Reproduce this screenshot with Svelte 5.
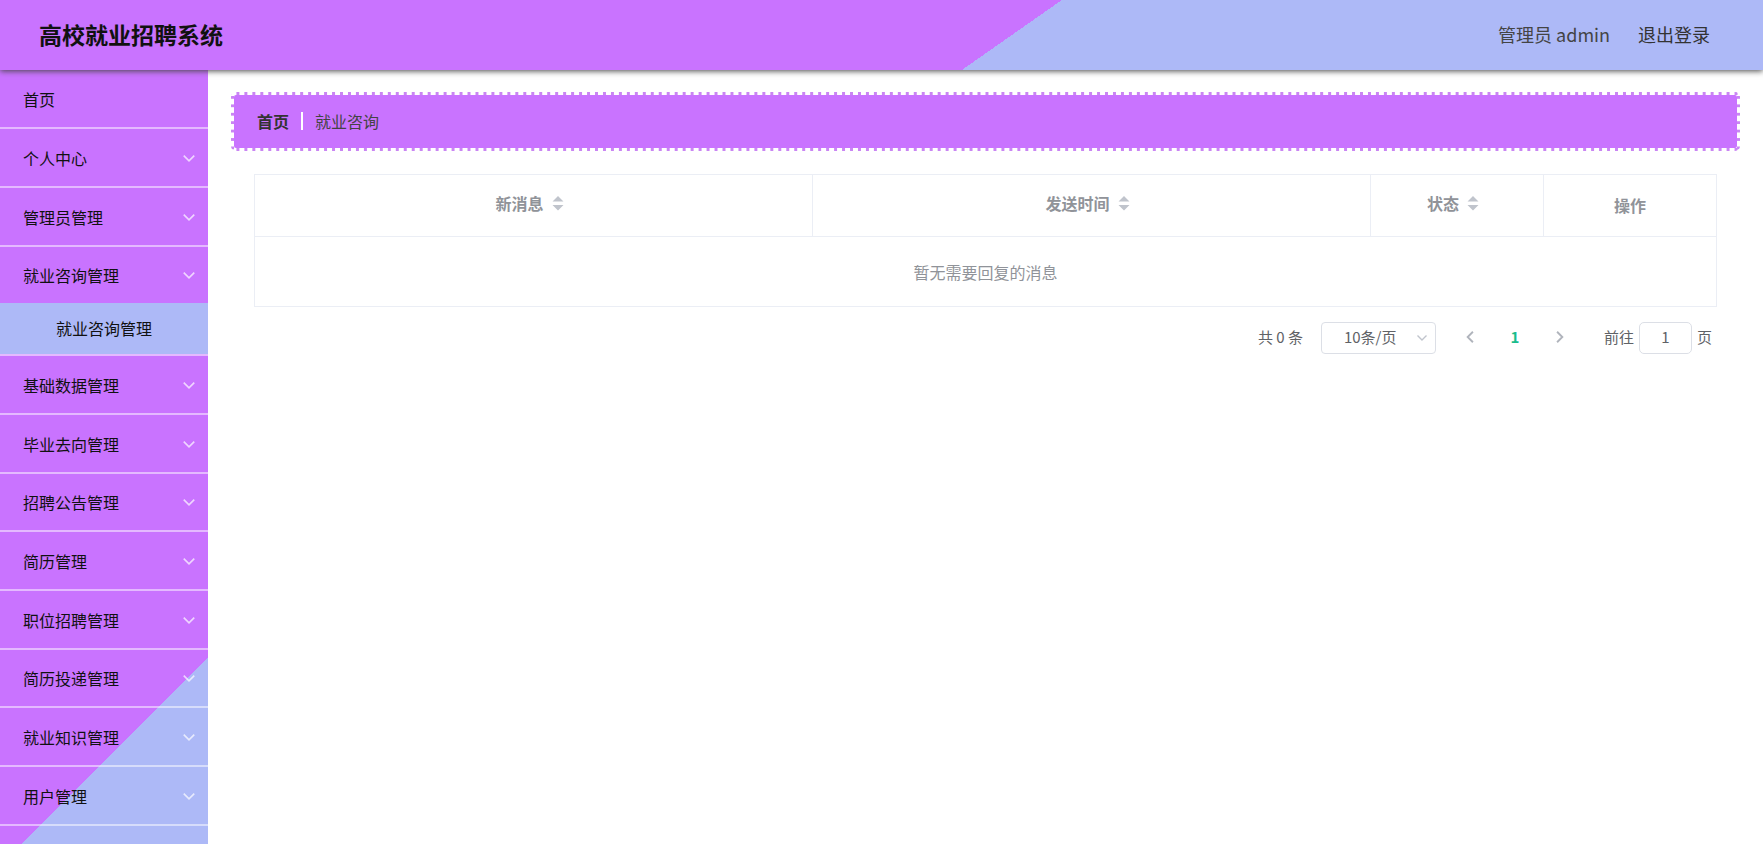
<script lang="ts">
	type MenuItem = { name: string; children?: string[]; open?: boolean };

	const menus: MenuItem[] = [
		{ name: '首页' },
		{ name: '个人中心', children: [] },
		{ name: '管理员管理', children: [] },
		{ name: '就业咨询管理', children: ['就业咨询管理'], open: true },
		{ name: '基础数据管理', children: [] },
		{ name: '毕业去向管理', children: [] },
		{ name: '招聘公告管理', children: [] },
		{ name: '简历管理', children: [] },
		{ name: '职位招聘管理', children: [] },
		{ name: '简历投递管理', children: [] },
		{ name: '就业知识管理', children: [] },
		{ name: '用户管理', children: [] }
	];

	const columns = [
		{ label: '新消息', sortable: true },
		{ label: '发送时间', sortable: true },
		{ label: '状态', sortable: true, narrow: true },
		{ label: '操作', sortable: false, narrow: true }
	];

	let page = $state('1');
	let pageSize = $state('10');
</script>

<div class="layout">
	<header class="navbar">
		<h1 class="title">高校就业招聘系统</h1>
		<div class="user">
			<span>管理员 admin</span>
			<a class="logout" href="#/login">退出登录</a>
		</div>
	</header>

	<div class="body">
		<nav class="sidebar">
			<ul class="menu">
				{#each menus as item}
					<li class="menu-item">
						<button class="menu-title">
							{item.name}
							{#if item.children}
								<svg class="arrow" viewBox="0 0 12 12" aria-hidden="true">
									<path d="M1.5 4L6 8.5L10.5 4" />
								</svg>
							{/if}
						</button>
						{#if item.open}
							{#each item.children ?? [] as child}
								<a class="submenu" href="#/chat">{child}</a>
							{/each}
						{/if}
					</li>
				{/each}
			</ul>
		</nav>

		<main class="main">
			<div class="breadcrumb">
				<a class="crumb-home" href="#/index">首页</a>
				<span class="separator"></span>
				<span>就业咨询</span>
			</div>

			<section class="content">
				<table>
					<thead>
						<tr>
							{#each columns as col}
								<th class:narrow={col.narrow} class:sortable={col.sortable}>
									<span class="cell">
										{col.label}
										{#if col.sortable}
											<svg class="sort" viewBox="0 0 12 16" aria-hidden="true">
												<path d="M6 1L11.5 6.5H0.5ZM0.5 10H11.5L6 15.5Z" />
											</svg>
										{/if}
									</span>
								</th>
							{/each}
						</tr>
					</thead>
					<tbody>
						<tr>
							<td colspan="4">暂无需要回复的消息</td>
						</tr>
					</tbody>
				</table>

				<div class="pagination">
					<span class="total">共 0 条</span>
					<div class="sizes">
						<select bind:value={pageSize} aria-label="每页条数">
							<option value="10">10条/页</option>
						</select>
						<svg class="caret" viewBox="0 0 12 12" aria-hidden="true">
							<path d="M1.5 3.5L6 8L10.5 3.5" />
						</svg>
					</div>
					<button class="step" aria-label="上一页" disabled>
						<svg viewBox="0 0 12 12" aria-hidden="true"><path d="M8.5 1.5L4 6L8.5 10.5" /></svg>
					</button>
					<button class="number">1</button>
					<button class="step" aria-label="下一页" disabled>
						<svg viewBox="0 0 12 12" aria-hidden="true"><path d="M3.5 1.5L8 6L3.5 10.5" /></svg>
					</button>
					<label class="jump">
						<span>前往</span>
						<input type="text" bind:value={page} />
						<span>页</span>
					</label>
				</div>
			</section>
		</main>
	</div>
</div>

<style>
	:global(body) {
		margin: 0;
		background: #fff;
		font-family: 'Noto Sans CJK SC', sans-serif;
	}

	.layout {
		display: flex;
		flex-direction: column;
		height: 100vh;
		overflow: hidden;
	}

	button,
	select,
	input {
		font-family: inherit;
	}

	button {
		padding: 0;
		border: 0;
		background: none;
		cursor: pointer;
	}

	a {
		color: inherit;
		text-decoration: none;
	}

	path {
		fill: none;
		stroke: currentColor;
		stroke-width: 1.4;
	}

	.navbar {
		position: relative;
		z-index: 1;
		display: flex;
		flex: none;
		align-items: center;
		justify-content: space-between;
		height: 70px;
		padding: 0 53px 2px 39px;
		box-sizing: border-box;
		background: linear-gradient(145deg, #c973ff 57%, #adb9f7 57%);
		box-shadow: 0 1px 6px #444;
	}

	.title {
		margin: 0;
		font-size: 23px;
		line-height: 34px;
		color: #111;
	}

	.user {
		display: flex;
		gap: 28px;
		font-size: 18px;
		color: #444;
	}

	.logout {
		color: #333;
	}

	.body {
		display: flex;
		flex: 1;
		min-height: 0;
	}

	.sidebar {
		flex: none;
		width: 208px;
		overflow: hidden;
		background: linear-gradient(135deg, #c973ff 81%, #adb9f7 81%);
	}

	.menu {
		margin: 0;
		padding: 0;
		list-style: none;
	}

	.menu-item {
		border-bottom: 2px solid rgba(255, 255, 255, 0.5);
	}

	.menu-title {
		display: flex;
		align-items: center;
		justify-content: space-between;
		width: 100%;
		height: 57px;
		padding: 0 12px 0 23px;
		font-size: 16px;
		color: #111;
	}

	.menu-item:nth-child(3n + 4) .menu-title {
		height: 56px;
	}

	.arrow {
		width: 14px;
		height: 14px;
		color: rgba(255, 255, 255, 0.7);
	}

	.submenu {
		display: block;
		padding-left: 56px;
		font-size: 16px;
		line-height: 51px;
		color: #111;
		background: #adb9f7;
	}

	.main {
		flex: 1;
		padding: 22px 23px;
	}

	/* stamp-like edge: small notches of colour along all four sides */
	.breadcrumb {
		--notch: transparent 4px, #c985f3 4px 7px, transparent 7px;
		display: flex;
		align-items: center;
		height: 59px;
		padding: 0 23px 2px;
		border: 3px solid transparent;
		box-sizing: border-box;
		border-radius: 5px;
		font-size: 16px;
		color: #444;
		background:
			linear-gradient(#c973ff, #c973ff) padding-box,
			linear-gradient(90deg, var(--notch)) top / 8px 3px round no-repeat border-box,
			linear-gradient(90deg, var(--notch)) bottom / 8px 3px round no-repeat border-box,
			linear-gradient(var(--notch)) left / 3px 8px no-repeat round border-box,
			linear-gradient(var(--notch)) right / 3px 8px no-repeat round border-box;
	}

	.crumb-home {
		font-weight: 700;
		color: #333;
	}

	.separator {
		width: 2px;
		height: 18px;
		margin: 0 12px;
		background: #fff;
	}

	.content {
		padding: 23px;
	}

	table {
		width: 100%;
		border: 1px solid #ebeef5;
		border-collapse: collapse;
		table-layout: fixed;
		color: #909399;
	}

	th {
		height: 62px;
		padding: 0 0 2px;
		border: 1px solid #ebeef5;
		box-sizing: border-box;
		font-size: 16px;
	}

	th.narrow {
		width: 173px;
	}

	.cell {
		display: flex;
		align-items: center;
		justify-content: center;
		gap: 8px;
	}

	.sortable .cell {
		padding: 0 8px 3px 0;
	}

	.sort {
		width: 12px;
		height: 16px;
		color: #c0c4cc;
	}

	.sort path {
		fill: currentColor;
		stroke: none;
	}

	td {
		height: 69px;
		padding: 0;
		font-size: 16px;
		text-align: center;
	}

	.pagination {
		display: flex;
		align-items: center;
		justify-content: flex-end;
		padding: 15px 5px 0 0;
		font-size: 15px;
		color: #606266;
	}

	.pagination span {
		padding-bottom: 3px;
	}

	.sizes {
		position: relative;
		margin: 0 17px 0 18px;
	}

	select {
		display: block;
		width: 115px;
		height: 32px;
		padding: 0 22px 3px;
		border: 1px solid #dcdfe6;
		border-radius: 4px;
		font-size: 15px;
		color: #606266;
		background: #fff;
		appearance: none;
	}

	.caret {
		position: absolute;
		top: 10px;
		right: 8px;
		width: 12px;
		height: 12px;
		color: #c0c4cc;
		pointer-events: none;
	}

	.step {
		display: flex;
		align-items: center;
		justify-content: center;
		width: 34px;
		height: 32px;
		padding-bottom: 2px;
		color: #b0b4bc;
	}

	.step svg {
		width: 14px;
		height: 14px;
	}

	.step path {
		stroke-width: 1.6;
	}

	.number {
		width: 56px;
		height: 32px;
		padding-bottom: 3px;
		font-size: 15px;
		font-weight: 700;
		color: #1abc8c;
	}

	.jump {
		display: flex;
		align-items: center;
		gap: 5px;
		margin-left: 27px;
	}

	.jump input {
		width: 53px;
		height: 32px;
		padding: 0 0 3px;
		border: 1px solid #dcdfe6;
		border-radius: 5px;
		box-sizing: border-box;
		font-size: 15px;
		text-align: center;
		color: #606266;
	}
</style>
